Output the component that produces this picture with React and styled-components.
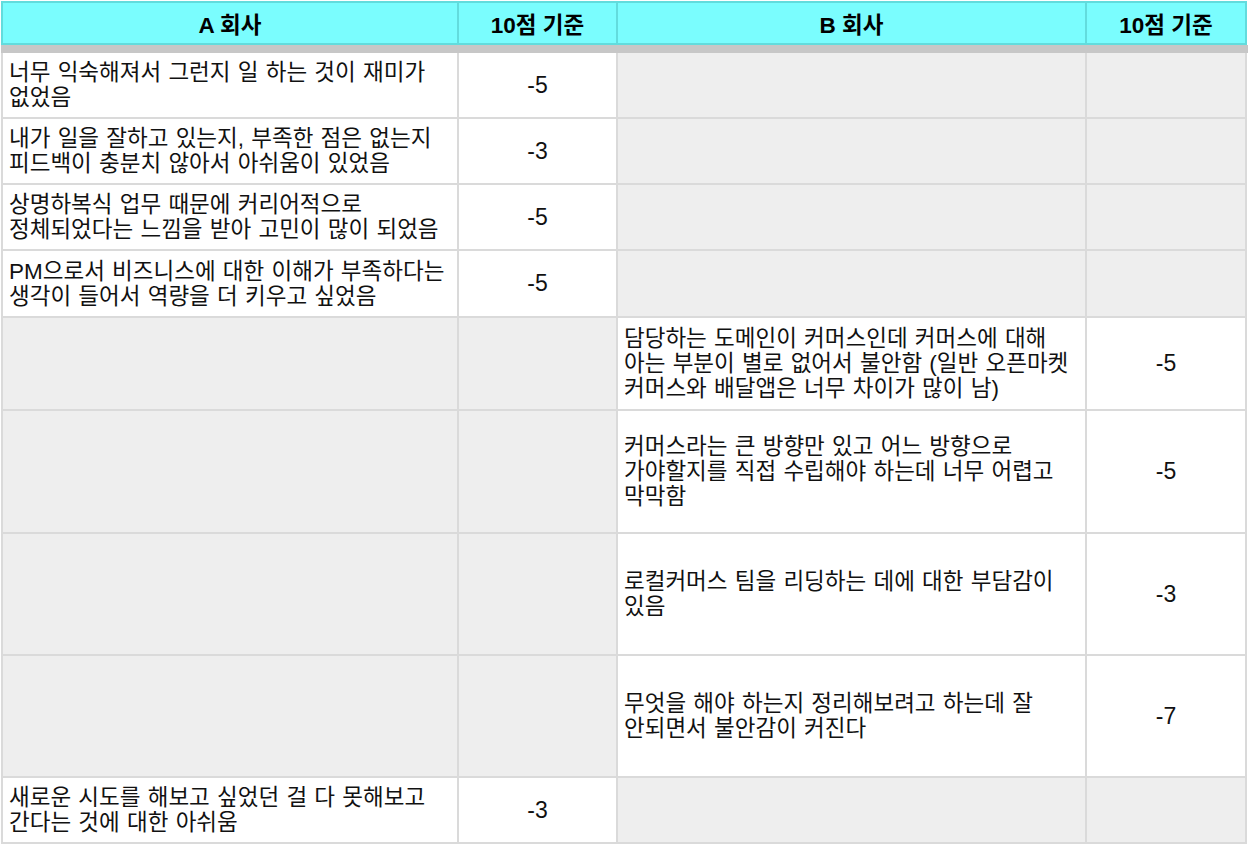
import styled, { createGlobalStyle } from 'styled-components';

const GlobalStyle = createGlobalStyle`
  body {
    margin: 0;
    background: #ffffff;
    font-family: 'Liberation Sans', 'Noto Sans CJK KR', sans-serif;
    color: #111111;
  }
`;

const COLUMNS = '454px 157px 467px 158px';

const Sheet = styled.div`
  width: 1248px;
  height: 846px;
  overflow: hidden;
  padding: 1px 0 0 1px;
  box-sizing: border-box;
`;

const HeaderRow = styled.div`
  display: grid;
  grid-template-columns: ${COLUMNS};
  gap: 2px;
  padding: 2px;
  width: max-content;
  background: #62dcdd;
`;

const HeaderCell = styled.div`
  height: 40px;
  background: #7afdfe;
  display: flex;
  align-items: center;
  justify-content: center;
  font-size: 22.5px;
  font-weight: 700;
  color: #000000;
`;

const Divider = styled.div`
  height: 8px;
  width: 1248px;
  background: #c7c7c7;
`;

const Body = styled.div`
  display: grid;
  grid-template-columns: ${COLUMNS};
  gap: 2px;
  padding: 0 2px 2px 2px;
  width: max-content;
  background: #dadada;
`;

const Cell = styled.div`
  height: ${(p) => p.$h}px;
  background: ${(p) => (p.$empty ? '#eeeeee' : '#ffffff')};
  display: flex;
  align-items: center;
  justify-content: ${(p) => (p.$score ? 'center' : 'flex-start')};
  padding: ${(p) => (p.$score ? '0' : '0 0 0 6px')};
  box-sizing: border-box;
  overflow: hidden;
  font-size: ${(p) => (p.$score ? '23px' : '22.5px')};
  line-height: 25px;
  word-spacing: 1px;
  color: #111111;
  white-space: pre;
`;

const rows = [
  { h: 64, a: '너무 익숙해져서 그런지 일 하는 것이 재미가\n없었음', as: '-5' },
  { h: 64, a: '내가 일을 잘하고 있는지, 부족한 점은 없는지\n피드백이 충분치 않아서 아쉬움이 있었음', as: '-3' },
  { h: 64, a: '상명하복식 업무 때문에 커리어적으로\n정체되었다는 느낌을 받아 고민이 많이 되었음', as: '-5' },
  { h: 65, a: 'PM으로서 비즈니스에 대한 이해가 부족하다는\n생각이 들어서 역량을 더 키우고 싶었음', as: '-5' },
  {
    h: 91,
    b: '담당하는 도메인이 커머스인데 커머스에 대해\n아는 부분이 별로 없어서 불안함 (일반 오픈마켓\n커머스와 배달앱은 너무 차이가 많이 남)',
    bs: '-5',
  },
  {
    h: 121,
    b: '커머스라는 큰 방향만 있고 어느 방향으로\n가야할지를 직접 수립해야 하는데 너무 어렵고\n막막함',
    bs: '-5',
  },
  { h: 120, b: '로컬커머스 팀을 리딩하는 데에 대한 부담감이\n있음', bs: '-3' },
  { h: 120, b: '무엇을 해야 하는지 정리해보려고 하는데 잘\n안되면서 불안감이 커진다', bs: '-7' },
  { h: 64, a: '새로운 시도를 해보고 싶었던 걸 다 못해보고\n간다는 것에 대한 아쉬움', as: '-3' },
];

const App = () => {
  return (
    <>
      <GlobalStyle />
      <Sheet>
        <HeaderRow>
          <HeaderCell>A 회사</HeaderCell>
          <HeaderCell>10점 기준</HeaderCell>
          <HeaderCell>B 회사</HeaderCell>
          <HeaderCell>10점 기준</HeaderCell>
        </HeaderRow>
        <Divider />
        <Body>
          {rows.map((r, i) => [
            <Cell key={`a${i}`} $h={r.h} $empty={!r.a}>
              {r.a}
            </Cell>,
            <Cell key={`as${i}`} $h={r.h} $empty={!r.as} $score>
              {r.as}
            </Cell>,
            <Cell key={`b${i}`} $h={r.h} $empty={!r.b}>
              {r.b}
            </Cell>,
            <Cell key={`bs${i}`} $h={r.h} $empty={!r.bs} $score>
              {r.bs}
            </Cell>,
          ])}
        </Body>
      </Sheet>
    </>
  );
};

export default App;
